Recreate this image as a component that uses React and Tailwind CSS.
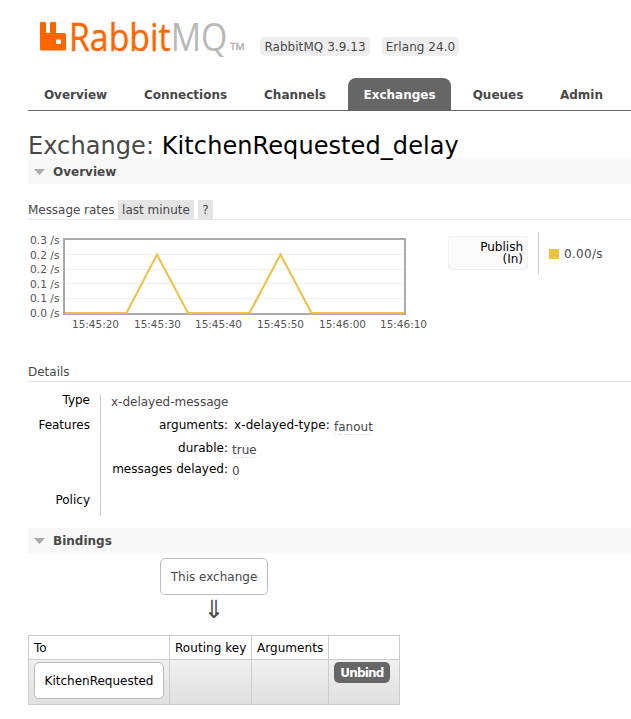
import React from "react";

const TABS = [
  { label: "Overview", box: "w-[95px]" },
  { label: "Connections", box: "w-[125px]" },
  { label: "Channels", box: "w-[92px] ml-[1px]" },
  { label: "Exchanges", box: "w-[103px] ml-[7px]", active: true },
  { label: "Queues", box: "w-[80px] ml-[7px]" },
  { label: "Admin", box: "w-[73px] ml-[7px]" },
];

const Y_LABELS = [
  ["0.3 /s", 244],
  ["0.2 /s", 259],
  ["0.2 /s", 273],
  ["0.1 /s", 288],
  ["0.1 /s", 302],
  ["0.0 /s", 317],
];

const X_LABELS = [
  ["15:45:20", 72],
  ["15:45:30", 134],
  ["15:45:40", 195],
  ["15:45:50", 257],
  ["15:46:00", 319],
  ["15:46:10", 380],
];

function Logo() {
  return (
    <svg className="block h-[60px] w-[232px] shrink-0" viewBox="28 0 232 60" role="img" aria-label="RabbitMQ">
      <path
        fill="#ff6600"
        fillRule="evenodd"
        d="M41 22H45Q46 22 46 23V33H50V23Q50 22 51 22H55Q56 22 56 23V33H64.500Q66 33 66 34.500V49Q66 50.500 64.500 50.500H41.500Q40 50.500 40 49V23Q40 22 41 22ZM56.500 39.500Q56 39.500 56 40V43.500Q56 44 56.500 44H60.500Q61 44 61 43.500V40Q61 39.500 60.500 39.500Z"
      />
      <g fontFamily="'Open Sans', sans-serif">
        <g transform="translate(69 50.500) scale(0.890 1)">
          <text fontSize="38" fill="#ff6600" stroke="#ff6600" strokeWidth="0.400">
            Rabbit<tspan fill="#b8b8b8" stroke="none">MQ</tspan>
          </text>
        </g>
        <g transform="translate(230 50) scale(1.150 1)">
          <text fontSize="8.800" fill="#b4b4b4" stroke="#b4b4b4" strokeWidth="0.400">TM</text>
        </g>
      </g>
    </svg>
  );
}

function Section({ title }) {
  return (
    <h2 className="flex h-[25px] items-center bg-[#f8f8f8] pl-[6px] font-bold">
      <svg className="mr-[8px] h-[6px] w-[11px]" viewBox="0 0 11 6">
        <path d="M0 0H11L5.500 6Z" fill="#aaa" />
      </svg>
      {title}
    </h2>
  );
}

function RateChart() {
  return (
    <svg className="block h-[107px] w-[410px] shrink-0" viewBox="28 229 410 107">
      <g stroke="#eeeeee" strokeWidth="1">
        <path d="M65 254.500H404M65 269.500H404M65 283.500H404M65 298.500H404" />
      </g>
      <rect x="64" y="239" width="341" height="75" fill="none" stroke="#aaaaaa" strokeWidth="2" />
      <path
        d="M65 313H126.500L157 254.500L188 313H249.500L280.500 254.500L311.500 313H404"
        fill="none"
        stroke="#edc240"
        strokeWidth="2"
      />
      <g fontFamily="'DejaVu Sans', sans-serif" fontSize="9.600" fill="#545454">
        {Y_LABELS.map(([label, y]) => (
          <text key={y} x="30" y={y} textLength="29.500" lengthAdjust="spacingAndGlyphs">{label}</text>
        ))}
        {X_LABELS.map(([label, x]) => (
          <text key={x} x={x} y="328" textLength="47" lengthAdjust="spacingAndGlyphs">{label}</text>
        ))}
      </g>
    </svg>
  );
}

function Value({ children }) {
  return (
    <span className="inline-block h-[18px] rounded-[4px] border-b border-dashed border-[#ddd] pt-[3px] leading-[15px] text-[#484848]">
      {children}
    </span>
  );
}

export default function App() {
  return (
    <div className="h-[719px] w-[631px] overflow-hidden bg-white pl-[28px] font-['DejaVu_Sans',sans-serif] text-[12px] leading-[16px] whitespace-nowrap text-[#484848]">
      <header className="flex h-[78px] items-start">
        <Logo />
        <span className="mt-[37px] flex h-[19px] w-[110px] items-center justify-center rounded-[5px] bg-[#eee] tracking-[0.05px]">RabbitMQ 3.9.13</span>
        <span className="mt-[37px] ml-[12px] flex h-[19px] w-[77px] items-center justify-center rounded-[5px] bg-[#eee] tracking-[0.05px]">Erlang 24.0</span>
      </header>

      <nav className="flex h-[33px] border-b border-[#666] font-bold">
        {TABS.map(({ label, box, active }) => (
          <a
            key={label}
            className={`flex h-[32px] shrink-0 items-center justify-center rounded-t-[8px] pt-[2px] ${box} ${active ? "bg-[#666] text-white" : ""}`}
          >
            {label}
          </a>
        ))}
      </nav>

      <h1 className="h-[48px] pt-[20px] text-[24px] leading-[30px] tracking-[0.08px]">
        Exchange: <b className="font-normal text-black">KitchenRequested_delay</b>
      </h1>

      <Section title="Overview" />

      <h3 className="mt-[16px] flex h-[20px] border-b border-[#e4e4e4] leading-[21px]">
        <span className="w-[86px] tracking-[-0.04px]">Message rates</span>
        <span className="ml-[4px] h-[19px] w-[76px] bg-[#e4e4e4] text-center">last minute</span>
        <span className="ml-[4px] h-[19px] w-[15px] bg-[#e4e4e4] text-center">?</span>
      </h3>

      <div className="mt-[9px] flex h-[107px]">
        <RateChart />
        <div className="mt-[3px] flex h-[42px]">
          <div className="mt-[4px] ml-[10px] h-[34px] w-[80px] rounded-[3px] border border-[#f0f0f0] bg-[#fafafa] pt-[4px] pr-[4px] text-right leading-[12px] text-black">
            Publish<br />(In)
          </div>
          <div className="ml-[10px] flex items-center border-l border-[#ccc] pl-[10px]">
            <span className="mt-[1px] mr-[5px] h-[10px] w-[10px] bg-[#edc240]" />
            <span className="pt-[2px] tracking-[0.3px]">0.00/s</span>
          </div>
        </div>
      </div>

      <h3 className="mt-[27px] h-[19px] border-b border-[#e4e4e4] leading-[18px]">Details</h3>

      <div className="mt-[12px] flex h-[122px]">
        <div className="flex w-[73px] flex-col border-r border-[#ccc] pr-[10px] text-right text-black">
          <span className="mt-[-2px] h-[25px]">Type</span>
          <span className="h-[75px]">Features</span>
          <span>Policy</span>
        </div>
        <div className="pl-[10px]">
          <div className="h-[23px]">x-delayed-message</div>
          <div className="flex h-[23px] text-black">
            <span className="w-[117px] text-right">arguments:</span>
            <span className="ml-[6px] w-[96px] tracking-[0.1px]">x-delayed-type:</span>
            <span className="ml-[4px]"><Value>fanout</Value></span>
          </div>
          <div className="flex h-[21px] text-black">
            <span className="w-[117px] text-right">durable:</span>
            <span className="ml-[4px]"><Value>true</Value></span>
          </div>
          <div className="flex text-black">
            <span className="w-[117px] text-right">messages delayed:</span>
            <span className="ml-[4px]"><Value>0</Value></span>
          </div>
        </div>
      </div>

      <div className="mt-[12px]">
        <Section title="Bindings" />
      </div>

      <div className="mt-[5px] flex w-[372px] flex-col items-center">
        <div className="flex h-[37px] w-[108px] items-center justify-center rounded-[5px] border border-[#bbb] bg-white">This exchange</div>
        <div className="h-[40px] pt-[1px] text-[25px] leading-[28px]">⇓</div>
      </div>

      <div className="grid w-[372px] grid-cols-[141px_82px_77px_71px] grid-rows-[24px_45px] border-t border-l border-[#ccc] text-black [&>div]:border-r [&>div]:border-b [&>div]:border-[#ccc]">
        <div className="pt-[4px] pl-[5px]">To</div>
        <div className="pt-[4px] pl-[5px] tracking-[0.05px]">Routing key</div>
        <div className="pt-[4px] pl-[5px] tracking-[0.05px]">Arguments</div>
        <div />
        <div className="bg-linear-to-b from-[#f0f0f0] to-[#e0e0e0] pt-[2px] pl-[5px]">
          <span className="flex h-[37px] w-[130px] items-center justify-center rounded-[5px] border border-[#bbb] bg-white">KitchenRequested</span>
        </div>
        <div className="bg-linear-to-b from-[#f0f0f0] to-[#e0e0e0]" />
        <div className="bg-linear-to-b from-[#f0f0f0] to-[#e0e0e0]" />
        <div className="bg-linear-to-b from-[#f0f0f0] to-[#e0e0e0] pt-[2px] pl-[5px]">
          <button className="flex h-[21px] w-[56px] items-center justify-center rounded-[5px] bg-[#666] font-bold tracking-[-0.8px] text-white">Unbind</button>
        </div>
      </div>
    </div>
  );
}
